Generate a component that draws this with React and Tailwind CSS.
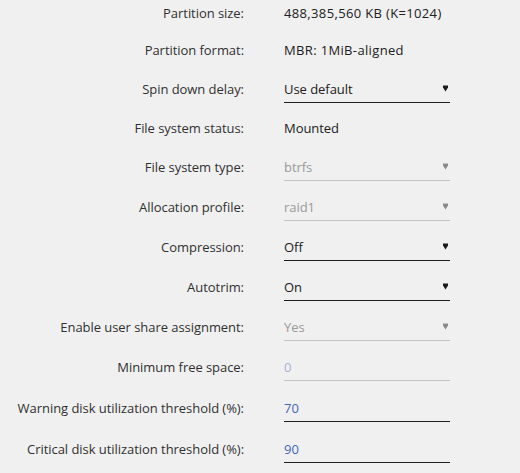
const rows = [
  { label: "Partition size:", value: "488,385,560 KB (K=1024)", kind: "text", wide: true, h: "h-[37px]" },
  { label: "Partition format:", value: "MBR: 1MiB-aligned", kind: "text", wide: true, h: "h-[39px]" },
  { label: "Spin down delay:", value: "Use default", kind: "select", h: "h-[39px]" },
  { label: "File system status:", value: "Mounted", kind: "text", h: "h-[39px]" },
  { label: "File system type:", value: "btrfs", kind: "select", disabled: true, h: "h-[40px]" },
  { label: "Allocation profile:", value: "raid1", kind: "select", disabled: true, h: "h-[40px]" },
  { label: "Compression:", value: "Off", kind: "select", h: "h-[40px]" },
  { label: "Autotrim:", value: "On", kind: "select", h: "h-[40px]" },
  { label: "Enable user share assignment:", value: "Yes", kind: "select", disabled: true, h: "h-[40px]" },
  { label: "Minimum free space:", value: "0", kind: "input", disabled: true, h: "h-[41px]" },
  { label: "Warning disk utilization threshold (%):", value: "70", kind: "input", h: "h-[41px]" },
  { label: "Critical disk utilization threshold (%):", value: "90", kind: "input", h: "h-[41px]" },
];

function Caret({ disabled }) {
  return (
    <svg width="5" height="7" viewBox="0 0 5 7" className="shrink-0">
      <path d="M0 0.5 H5 V2.5 L2.5 6.5 L0 2.5 Z" fill={disabled ? "#8a8a8a" : "#1c1c1c"} />
    </svg>
  );
}

function Value({ row }) {
  if (row.kind === "text") {
    return <div className={`text-[#202020] ${row.wide ? "tracking-[0.35px]" : ""}`}>{row.value}</div>;
  }
  const line = row.disabled ? "border-[#c4c4c4]" : "border-[#1e1e1e]";
  if (row.kind === "select") {
    return (
      <div className={`flex h-[24px] w-[166px] items-start justify-between border-b ${line}`}>
        <span className={row.disabled ? "text-[#9a9a9a]" : "text-[#202020]"}>{row.value}</span>
        <span className="mt-[6px] mr-[2px]">
          <Caret disabled={row.disabled} />
        </span>
      </div>
    );
  }
  return (
    <div className={`h-[24px] w-[166px] border-b ${line}`}>
      <span className={row.disabled ? "text-[#a7b0d6]" : "text-[#4565b8]"}>{row.value}</span>
    </div>
  );
}

export default function App() {
  return (
    <div
      className="min-h-[473px] bg-[#f0f0f0] pt-[3px] text-[13px] leading-[20px] tracking-[-0.05px]"
      style={{ fontFamily: '"Open Sans", "Noto Sans", sans-serif' }}
    >
      {rows.map((row) => (
        <div key={row.label} className={`flex items-start gap-[40px] ${row.h}`}>
          <div className="w-[244px] shrink-0 text-right text-[#303030]">{row.label}</div>
          <Value row={row} />
        </div>
      ))}
    </div>
  );
}
